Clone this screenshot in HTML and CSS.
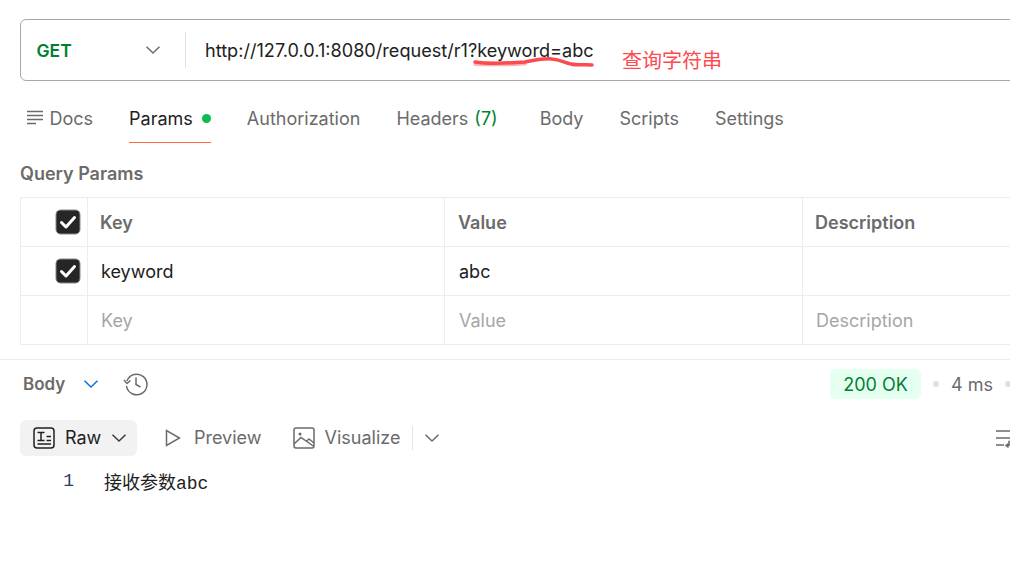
FILE: index.html
```html
<!DOCTYPE html>
<html lang="en">
<head>
<meta charset="utf-8">
<title>Request</title>
<link rel="stylesheet" href="styles.css">
</head>
<body>
<div class="page">
  <section class="request">
    <div class="urlbar">
      <div class="method"><span>GET</span>
        <svg class="chev" width="16" height="16" viewBox="0 0 16 16"><path d="M1.5 4.8 8 11l6.5-6.2"/></svg>
      </div>
      <div class="url">http://127.0.0.1:8080/request/r1?keyword=abc</div>
    </div>
    <nav class="tabs">
      <a class="tab docs"><svg width="18" height="16" viewBox="0 0 18 16"><path d="M0 1.5h16M0 5.5h16M0 9.5h16M0 13.500h9"/></svg>Docs</a>
      <a class="tab active">Params<i class="dot"></i></a>
      <a class="tab">Authorization</a>
      <a class="tab">Headers <em>(7)</em></a>
      <a class="tab">Body</a>
      <a class="tab">Scripts</a>
      <a class="tab">Settings</a>
    </nav>
    <h2 class="qp">Query Params</h2>
    <div class="table">
      <div class="cell check"><svg class="cb" width="26" height="26" viewBox="0 0 26 26"><rect x="1" y="1" width="24" height="24" rx="4.500"/><path d="M6.500 13.500 11 18l8.500-9.500"/></svg></div>
      <div class="cell head">Key</div>
      <div class="cell head">Value</div>
      <div class="cell head">Description</div>
      <div class="cell check"><svg class="cb" width="26" height="26" viewBox="0 0 26 26"><rect x="1" y="1" width="24" height="24" rx="4.500"/><path d="M6.500 13.500 11 18l8.500-9.500"/></svg></div>
      <div class="cell val">keyword</div>
      <div class="cell val">abc</div>
      <div class="cell val"></div>
      <div class="cell check"></div>
      <div class="cell val ph">Key</div>
      <div class="cell val ph">Value</div>
      <div class="cell val ph">Description</div>
    </div>
  </section>
  <section class="response">
    <div class="resp-top">
      <div class="resp-left">
        <b class="body-label">Body</b>
        <svg class="chev blue" width="16" height="16" viewBox="0 0 16 16"><path d="M1.500 4.800 8 11l6.500-6.200"/></svg>
        <svg class="hist" width="26" height="26" viewBox="0.500 0.500 26 26"><path d="M4.500 10.500A10.300 10.300 0 1 1 4 15.500"/><path d="M1.500 9.500 4.500 13l3.500-3"/><path d="M13.500 7v7l4.500 2.500"/></svg>
      </div>
      <div class="resp-right">
        <span class="status">200 OK</span>
        <i class="sep"></i>
        <span class="time">4 ms</span>
        <i class="sep"></i>
      </div>
    </div>
    <div class="views">
      <div class="view raw">
        <svg width="22" height="22" viewBox="0 0 22 22"><rect x="1" y="1" width="20" height="20" rx="3"/><path d="M4.500 5.500h7M8 5.500v8M4.500 13.500h7M13.500 9.500h4.500M13.500 13.500h4.500M4.500 17h13.500"/></svg>
        <span>Raw</span>
        <svg class="chev dark" width="16" height="16" viewBox="0 0 16 16"><path d="M1.500 4.800 8 11l6.500-6.200"/></svg>
      </div>
      <div class="view">
        <svg width="18" height="18" viewBox="0 0 18 18"><path d="M2.500 1.500v15L15.500 9z"/></svg>
        <span>Preview</span>
      </div>
      <div class="view vis">
        <svg width="22" height="22" viewBox="0 0 22 22"><rect x="1" y="1" width="20" height="20" rx="2"/><circle cx="7" cy="7" r="1.500" class="fill"/><path d="M1 17 8 10.500l13 9M13 14.500l3-2.500 5 4"/></svg>
        <span>Visualize</span>
      </div>
      <div class="more">
        <svg class="chev" width="16" height="16" viewBox="0 0 16 16"><path d="M1.500 4.800 8 11l6.500-6.200"/></svg>
      </div>
      <svg class="wrap" width="16" height="20" viewBox="0 0 16 20"><path d="M0 2h16M0 9h16M0 16h8"/><path d="M16 12.500h-3v4h-2M12.500 14.500l-2.500 2 2.500 2"/></svg>
    </div>
    <div class="code"><span class="ln">1</span><span class="src">接收参数abc</span></div>
  </section>
  <svg class="scribble" width="124" height="14" viewBox="0 0 124 14"><path class="halo" d="M3 8.500c20 .5 35 .5 50-.5"/><path d="M3 6c14 2 36 1 50 0C64 4 72 2 80 3c8 .5 13 4 19 5 7 1.500 14 .5 21 1"/></svg>
  <span class="note">查询字符串</span>
</div>
</body>
</html>
```
FILE: styles.css
```css
* { box-sizing: border-box; }
html, body { margin: 0; padding: 0; background: #fff; }
body { width: 1010px; height: 571px; overflow: hidden; font-family: Inter, "Noto Sans CJK SC", sans-serif; font-size: 18px; color: #212121; }
svg { display: block; flex: none; fill: none; stroke-width: 1.5; }
.page { position: relative; width: 1010px; height: 571px; overflow: hidden; }
.chev { stroke: #6b6b6b; stroke-width: 1.5; }
.chev.blue { stroke: #0f6fd6; }
.chev.dark { stroke: #3a3a3a; }

.request { padding: 19px 0 0 20px; height: 360px; border-bottom: 1px solid #ededed; width: 1010px; }
.urlbar { width: 1100px; height: 62px; border: 1px solid #a8a8a8; border-radius: 6px; display: flex; align-items: center; margin-left: -0.5px; }
.method { width: 165.500px; height: 36px; padding: 0 24px 0 16px; display: flex; align-items: center; justify-content: space-between; border-right: 1px solid #e2e2e2; font-weight: 600; color: #007f31; font-size: 17.500px; }
.url { padding: 1px 0 0 19px; font-size: 18.130px; color: #212121; line-height: 1; }

.tabs { display: flex; height: 62px; gap: 36px; padding-left: 7px; align-items: stretch; }
.tab { display: flex; align-items: center; color: #6b6b6b; border-bottom: 1.500px solid transparent; height: 62px; padding-top: 13px; }
.tab.docs svg { stroke: #6b6b6b; margin-right: 4.500px; }
.tab.active { color: #212121; border-bottom-color: #ff6c37; }
.tab em { font-style: normal; color: #007f31; margin-left: 6px; margin-right: 6px; }
.dot { width: 9px; height: 9px; border-radius: 50%; background: #0cbb52; margin-left: 9px; }

.qp { margin: 21px 0 0; font-size: 18px; line-height: 20px; font-weight: 600; color: #6b6b6b; }
.table { display: grid; grid-template-columns: 67px 357px 358px 300px; grid-auto-rows: 49px; margin-top: 13px; width: 1083px; border-left: 1px solid #ededed; border-top: 1px solid #ededed; }
.cell { display: flex; align-items: center; padding-left: 13px; border-right: 1px solid #ededed; border-bottom: 1px solid #ededed; }
.cell:nth-child(4n+3) { padding-left: 14px; }
.check { padding-left: 34px; }
.cb rect { fill: #262626; stroke: #8a8a8a; stroke-width: 1; }
.cb path { stroke: #fff; stroke-width: 3; stroke-linecap: round; stroke-linejoin: round; }
.head { font-weight: 600; color: #6b6b6b; padding-left: 12px; }
.head:nth-child(4n+3) { padding-left: 13px; }
.ph { color: #a6a6a6; }

.resp-top { display: flex; justify-content: space-between; align-items: center; height: 48px; padding: 0 0 0 23px; }
.resp-left, .resp-right { display: flex; align-items: center; }
.body-label { font-size: 17px; font-weight: 600; color: #6b6b6b; }
.chev.blue { margin-left: 18px; }
.hist { stroke: #6b6b6b; margin-left: 24px; }
.resp-right { gap: 12px; margin-right: -1px; }
.status { height: 30px; width: 91px; display: flex; align-items: center; justify-content: center; background: #e5fff1; color: #007f31; border-radius: 6px; }
.sep { width: 6px; height: 6px; border-radius: 50%; background: #e0e0e0; }
.time { color: #6b6b6b; }

.views { display: flex; align-items: center; height: 36px; margin-top: 12px; padding-left: 20px; color: #6b6b6b; position: relative; }
.view { display: flex; align-items: center; height: 36px; gap: 10px; padding-bottom: 1px; }
.view svg { stroke: #6b6b6b; }
.view .fill { fill: #6b6b6b; stroke: none; }
.raw { width: 117px; background: #f2f2f2; border-radius: 6px; padding: 0 11px 1px 13px; color: #212121; }
.raw svg:first-child { stroke: #212121; }
.raw .chev { stroke: #3a3a3a; margin-left: 0; }
.view:nth-child(2) { margin-left: 27px; gap: 12px; }
.vis { margin-left: 31px; }
.more { height: 24px; margin-left: 12px; padding-left: 11px; border-left: 1px solid #e2e2e2; display: flex; align-items: center; }
.wrap { stroke: #6b6b6b; position: absolute; left: 996px; top: 9px; }

.code { display: flex; align-items: center; height: 24px; margin-top: 12.500px; font-size: 18px; color: #212121; }
.ln { width: 74px; text-align: right; margin-right: 30px; color: #2b3a67; font-family: "Liberation Mono", monospace; font-size: 18px; }
.src { font-family: "Liberation Mono", "Noto Sans CJK SC", monospace; font-size: 18px; }

.scribble { position: absolute; left: 472px; top: 56px; stroke: #fb4a50; stroke-width: 3.500; stroke-linecap: round; }
.scribble .halo { stroke: #fcb4b6; stroke-width: 3; }
.note { position: absolute; left: 622px; top: 46px; font-family: "Noto Sans CJK SC", sans-serif; font-size: 20px; line-height: 28px; color: #fb4a50; }
```
